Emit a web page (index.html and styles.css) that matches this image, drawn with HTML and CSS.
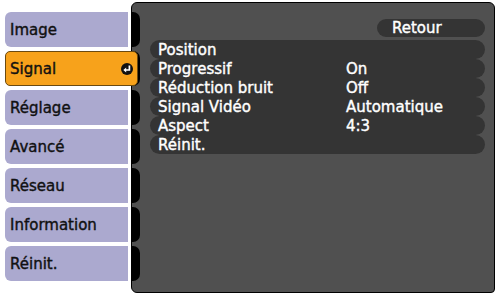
FILE: index.html
```html
<!DOCTYPE html>
<html lang="fr">
<head>
<meta charset="utf-8">
<title>Signal</title>
<link rel="stylesheet" href="styles.css">
</head>
<body>
<div class="screen">
  <nav class="tabs">
    <div class="tab">Image</div>
    <div class="tab selected"><span>Signal</span><svg class="enter" viewBox="0 0 12 12" width="12" height="12"><circle cx="6" cy="6" r="6" fill="#111"/><path d="M8.4 2.6 V7 H4.6" stroke="#fff" stroke-width="1.7" fill="none"/><polygon points="2.3,7 5.2,4.6 5.2,9.4" fill="#fff"/></svg></div>
    <div class="tab">Réglage</div>
    <div class="tab">Avancé</div>
    <div class="tab">Réseau</div>
    <div class="tab">Information</div>
    <div class="tab">Réinit.</div>
  </nav>
  <section class="panel">
    <div class="hooks">
      <div class="hook"></div><div class="hook"></div><div class="hook"></div><div class="hook"></div><div class="hook"></div><div class="hook"></div><div class="hook"></div>
    </div>
    <div class="content">
      <div class="top"><div class="back">Retour</div></div>
      <div class="rows">
        <div class="row"><span class="label">Position</span><span class="value"></span></div>
        <div class="row"><span class="label">Progressif</span><span class="value">On</span></div>
        <div class="row"><span class="label">Réduction bruit</span><span class="value">Off</span></div>
        <div class="row"><span class="label">Signal Vidéo</span><span class="value">Automatique</span></div>
        <div class="row"><span class="label">Aspect</span><span class="value">4:3</span></div>
        <div class="row"><span class="label">Réinit.</span><span class="value"></span></div>
      </div>
    </div>
  </section>
</div>
</body>
</html>
```
FILE: styles.css
```css
body {
  margin: 0;
  background: #fff;
  font-family: "DejaVu Sans", sans-serif;
  font-size: 15px;
  -webkit-text-stroke: 0.4px currentColor;
}
.screen {
  display: flex;
  width: 501px;
  height: 296px;
}
.tabs {
  flex: none;
  width: 123px;
  padding: 12px 0 0 5px;
  display: flex;
  flex-direction: column;
  gap: 4px;
  position: relative;
  z-index: 2;
}
.tab {
  box-sizing: border-box;
  height: 35px;
  background: #aba9cf;
  border-radius: 6px 0 0 6px;
  display: flex;
  align-items: center;
  padding-left: 5px;
  color: #111;
}
.tab.selected {
  width: 133px;
  background: #f7a21b;
  border: 1px solid #6b4a10;
  border-radius: 5px;
  padding-left: 4px;
  padding-right: 4px;
  justify-content: space-between;
}
.enter {
  display: block;
}
.panel {
  flex: none;
  box-sizing: border-box;
  margin: 2px 0 0 3px;
  width: 364px;
  height: 291px;
  background: #505050;
  border: 1px solid #000;
  border-radius: 6px 6px 4px 6px;
  display: flex;
}
.hooks {
  flex: none;
  width: 8px;
  padding-top: 9px;
  display: flex;
  flex-direction: column;
  gap: 4px;
}
.hook {
  height: 35px;
  background: #000;
  border-radius: 0 7px 7px 0;
}
.content {
  flex: 1;
  padding: 16px 9px 0 10px;
}
.top {
  display: flex;
  justify-content: flex-end;
  margin-bottom: 3px;
}
.back {
  box-sizing: border-box;
  width: 108px;
  height: 18px;
  line-height: 18px;
  padding-left: 15px;
  background: #343434;
  border-radius: 9px;
  color: #fff;
}
.row {
  height: 19px;
  background: #343434;
  border-radius: 9.5px;
  display: flex;
  align-items: center;
  padding-left: 8px;
  color: #fff;
}
.label {
  width: 188px;
  flex: none;
}
```
